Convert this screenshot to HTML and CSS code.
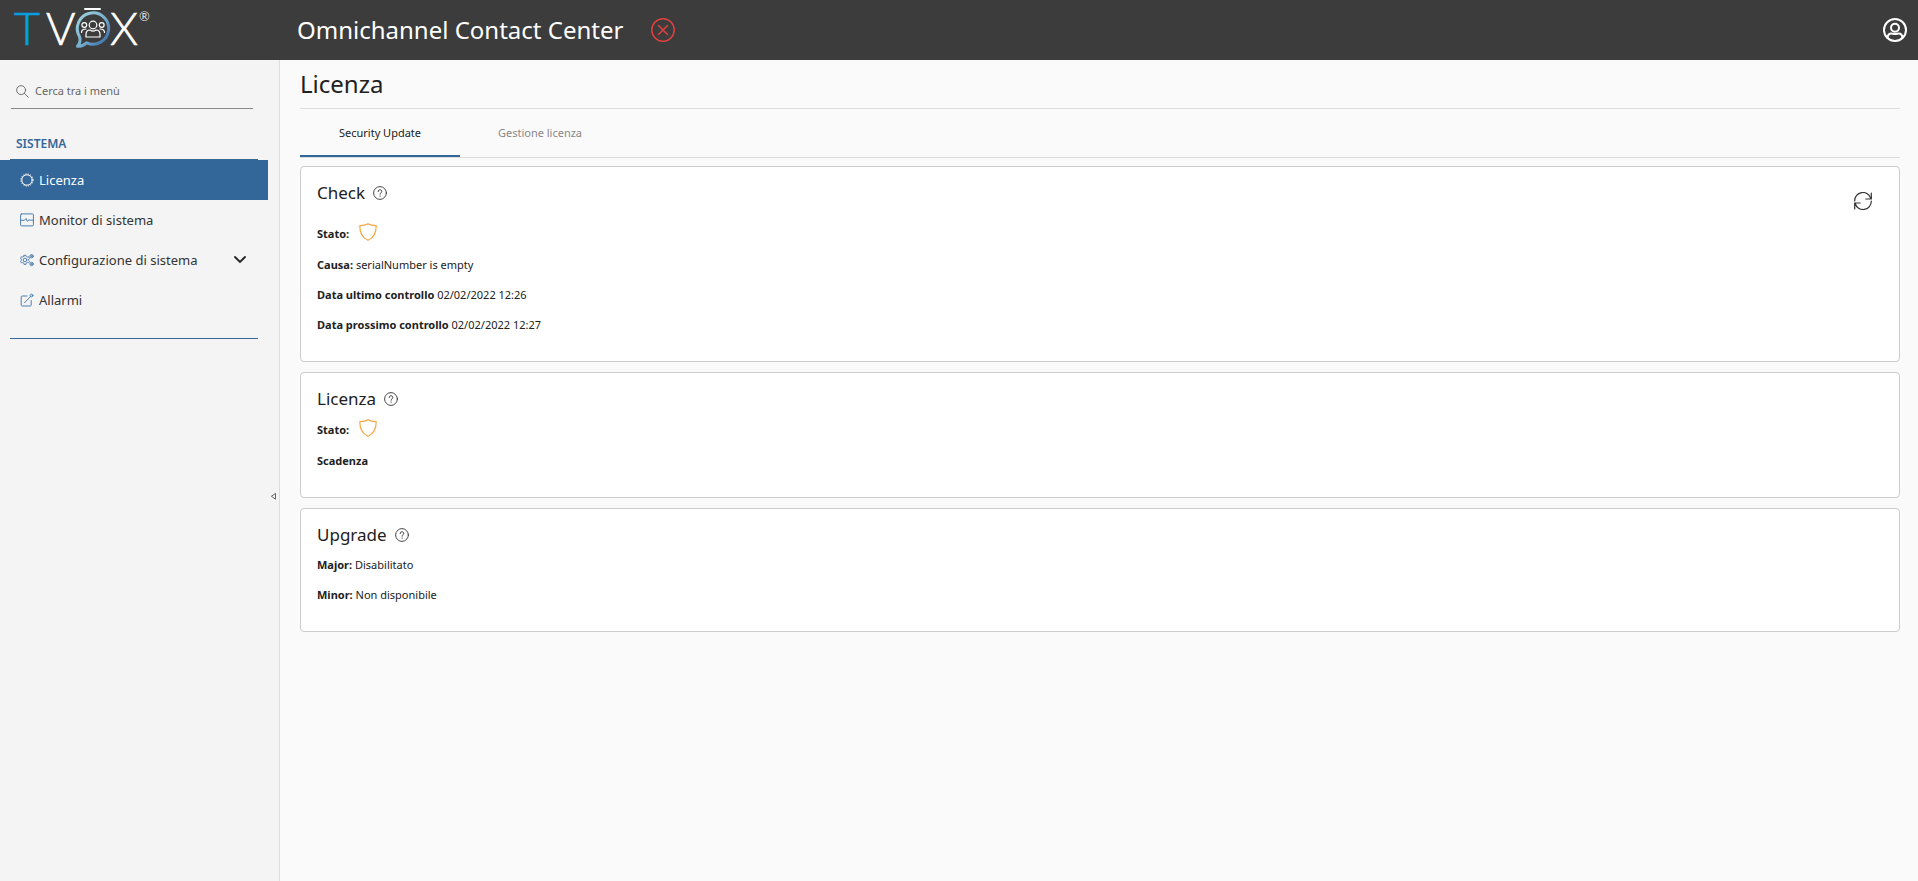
FILE: index.html
```html
<!DOCTYPE html>
<html lang="it">
<head>
<meta charset="utf-8">
<meta name="viewport" content="width=device-width, initial-scale=1">
<title>TVox - Licenza</title>
<link rel="stylesheet" href="styles.css">
</head>
<body>
<svg class="defs" width="0" height="0" aria-hidden="true">
  <symbol id="help" viewBox="0 0 14 14"><circle cx="7" cy="7" r="6.4" fill="none" stroke="currentColor" stroke-width=".9"/><path d="M5.200 5.500C5.200 4.300 6 3.800 7 3.800s1.800.6 1.800 1.600C8.800 6.700 7.100 6.800 7.100 8.200" fill="none" stroke="currentColor" stroke-width="1"/><circle cx="7.1" cy="10.1" r=".65" fill="currentColor"/></symbol>
  <symbol id="shield" viewBox="0 0 18 18"><path d="M9 .7C6.8 2 3.8 2.6.8 2.7.7 9.600 3 14.500 9 17.300 15 14.500 17.300 9.600 17.200 2.700 14.200 2.600 11.200 2 9 .7Z" fill="none" stroke="currentColor" stroke-width="1.2" stroke-linejoin="round"/></symbol>
</svg>
<header class="topbar">
  <a class="brand" href="#" aria-label="TVOX">
    <svg class="logo" viewBox="0 0 160 60" aria-hidden="true">
      <defs><linearGradient id="bubble" x1="0" y1="0" x2="1" y2="1"><stop offset="0" stop-color="#9fd3df"/><stop offset=".5" stop-color="#79b2cf"/><stop offset="1" stop-color="#2b62a8"/></linearGradient></defs>
      <text class="logo-letter logo-t" x="14" y="45">T</text>
      <text class="logo-letter" x="46" y="45">V</text>
      <text class="logo-letter" x="110" y="45">X</text>
      <text class="logo-mark" x="139" y="21">®</text>
      <path d="M85 9h15" stroke="#fff" stroke-width="2"/>
      <path d="M79.500 36.500A15.700 15.700 0 1 1 86.500 42.800C83.500 45.500 80.500 46.500 77.500 46.300 80 43.500 80.500 39.500 79.500 36.500Z" fill="none" stroke="url(#bubble)" stroke-width="3" stroke-linejoin="round"/>
      <g fill="none" stroke="#fff" stroke-width="1.200"><circle cx="93" cy="25" r="3.800"/><path d="M86 37v-2.500c0-3 2-4.500 4-4.500 2 1.500 4 1.500 6 0 2 0 4 1.500 4 4.500V37Z"/><circle cx="84.300" cy="25" r="2.400"/><circle cx="101.700" cy="25" r="2.400"/><path d="M81.500 32.500c0-2.500 1-3.500 4.500-3.500M104.500 32.500c0-2.500-1-3.500-4.500-3.500"/></g>
    </svg>
  </a>
  <div class="product">Omnichannel Contact Center</div>
  <svg class="status" viewBox="0 0 24 24" role="img" aria-label="Non connesso"><circle cx="12" cy="12" r="11.200"/><path d="m7.500 7.500 9 9m0-9-9 9"/></svg>
  <button class="account" type="button" aria-label="Profilo utente"><svg viewBox="0 0 24 24"><circle cx="12" cy="12" r="11"/><circle cx="12" cy="9.800" r="4"/><path d="M4.600 20c0-3 1.400-4.600 3.800-4.600 1.200 0 1.800.7 3.600.7s2.400-.7 3.600-.7c2.400 0 3.800 1.600 3.800 4.600"/></svg></button>
</header>
<div class="layout">
  <aside class="sidebar">
    <div class="menu">
      <label class="search"><svg viewBox="0 0 14 14" aria-hidden="true"><circle cx="5.500" cy="5.500" r="4.800"/><path d="m9 9 4.200 4.200"/></svg><input type="search" placeholder="Cerca tra i menù" aria-label="Cerca tra i menù"></label>
      <h2 class="section">SISTEMA</h2>
      <nav class="nav">
        <a class="item active" href="#" aria-current="page"><svg viewBox="0 0 14 14"><circle cx="7" cy="7" r="5.200"/><circle cx="7" cy="7" r="6.100" stroke-linecap="butt" stroke-dasharray="1.200 1.200"/></svg>Licenza</a>
        <a class="item" href="#"><svg viewBox="0 0 14 14"><rect x=".6" y=".9" width="12.800" height="12" rx="1"/><path d="M1 7.300h3.500L6 5.500l1.500 3L9 6.500l.6.700H13"/></svg>Monitor di sistema</a>
        <a class="item" href="#"><svg viewBox="0 0 14 14"><circle cx="5" cy="7" r="1.800"/><path d="m4.100 2.300 1.800 0 .3 1.200 1.200.6 1.200-.4.900 1.500-.8.900v1.400l.8.900-.9 1.500-1.200-.4-1.200.6-.3 1.300H4.100l-.3-1.300-1.200-.6-1.200.4-.9-1.500.8-.9V6.100l-.8-.9.900-1.500 1.200.4 1.200-.6Z"/><circle cx="11.600" cy="3.200" r="1.700"/><circle cx="11.600" cy="3.200" r=".5"/><circle cx="11.600" cy="11" r="1.700"/><circle cx="11.600" cy="11" r=".5"/></svg><span class="name">Configurazione di sistema</span><svg class="chevron" viewBox="0 0 12 8"><path d="m1 1 5 5 5-5"/></svg></a>
        <a class="item" href="#"><svg viewBox="0 0 14 14"><path d="M7 3H2.200C1.600 3 1.200 3.400 1.200 4v8c0 .6.400 1 1 1h8c.6 0 1-.4 1-1V7.500M4.500 9.800 11 3"/><circle cx="11.500" cy="2.500" r="1.400"/></svg>Allarmi</a>
      </nav>
    </div>
    <button class="collapse" type="button" aria-label="Riduci menù"><svg viewBox="0 0 5 7"><path d="M4.500.8v5.400L.7 3.500Z"/></svg></button>
  </aside>
  <main class="content">
    <h1 class="title">Licenza</h1>
    <div class="tabs" role="tablist">
      <button class="tab selected" type="button" role="tab" aria-selected="true">Security Update</button>
      <button class="tab" type="button" role="tab" aria-selected="false">Gestione licenza</button>
    </div>
    <section class="card">
      <div class="card-head">
        <h2>Check <svg class="help"><use href="#help"/></svg></h2>
        <button class="refresh" type="button" aria-label="Aggiorna"><svg viewBox="0 0 18 18"><path d="M.7 9A8.200 8.200 0 0 1 16.800 6.500M17.300 9A8.200 8.200 0 0 1 1.200 11.500M17.300 1v6h-5.500M.7 17v-6h5.500"/></svg></button>
      </div>
      <p class="state"><strong>Stato:</strong><svg class="shield"><use href="#shield"/></svg></p>
      <p><strong>Causa:</strong> serialNumber is empty</p>
      <p><strong>Data ultimo controllo</strong> 02/02/2022 12:26</p>
      <p><strong>Data prossimo controllo</strong> 02/02/2022 12:27</p>
    </section>
    <section class="card">
      <h2>Licenza <svg class="help"><use href="#help"/></svg></h2>
      <p class="state"><strong>Stato:</strong><svg class="shield"><use href="#shield"/></svg></p>
      <p><strong>Scadenza</strong></p>
    </section>
    <section class="card">
      <h2>Upgrade <svg class="help"><use href="#help"/></svg></h2>
      <p><strong>Major:</strong> Disabilitato</p>
      <p><strong>Minor:</strong> Non disponibile</p>
    </section>
  </main>
</div>
</body>
</html>
```
FILE: styles.css
```css
* { box-sizing: border-box; }
body {
  margin: 0;
  min-height: 100vh;
  display: flex;
  flex-direction: column;
  background: #fafafa;
  color: #212121;
  font: 11px/20px "Segoe UI", "Noto Sans", "Open Sans", sans-serif;
}
h1, h2, p { margin: 0; }
button { border: 0; padding: 0; background: none; color: inherit; font: inherit; cursor: pointer; }
a { color: inherit; text-decoration: none; }
svg { fill: none; stroke-linecap: round; flex: none; }
.defs { position: absolute; }

.topbar { height: 60px; display: flex; align-items: center; padding-right: 11px; background: #3c3c3c; color: #fff; }
.brand { width: 297px; height: 60px; }
.logo { display: block; width: 160px; height: 60px; }
.logo-letter { font: 300 45px Lato, sans-serif; fill: #fff; stroke: #fff; stroke-width: 0.6; }
.logo-t { fill: #069ee0; stroke: #069ee0; }
.logo-mark { font: 13px Lato, sans-serif; fill: #ddd; }
.product { font-size: 24px; line-height: 32px; }
.status { width: 24px; height: 24px; margin-left: 28px; stroke: #e0413f; stroke-width: 1.5; }
.account { margin-left: auto; width: 24px; height: 24px; }
.account svg { display: block; stroke: #fff; stroke-width: 2; }

.layout { flex: 1; display: flex; }
.sidebar { width: 280px; display: flex; background: #f4f4f4; border-right: 1px solid #ddd; }
.menu { width: 268px; padding-top: 14px; }
.search { display: flex; align-items: center; gap: 6px; height: 35px; margin: 0 15px 0 11px; padding: 0 5px; border-bottom: 1px solid #8a8a8a; }
.search svg { width: 13px; height: 13px; stroke: #666; }
.search input { flex: 1; min-width: 0; padding: 0; border: 0; outline: 0; background: none; font: inherit; color: #666; }
.search input::placeholder { color: #666; opacity: 1; }
.section { margin: 25px 10px 0; padding: 0 6px 5px; border-bottom: 1px solid #336699; color: #336699; font-size: 12px; line-height: 20px; font-weight: 600; }
.nav { padding-bottom: 18px; }
.nav::after { content: ""; display: block; margin: 18px 10px 0; border-bottom: 1px solid #336699; }
.item { height: 40px; display: flex; align-items: center; gap: 5px; padding: 0 22px 0 20px; font-size: 13px; color: #333; }
.item svg { width: 14px; height: 14px; stroke: #4d7fb0; stroke-width: 1; }
.item.active { background: #336699; color: #fff; }
.item.active svg { stroke: #fff; }
.item .name { flex: 1; white-space: nowrap; }
.item .chevron { width: 12px; height: 8px; stroke: #222; stroke-width: 1.8; }
.collapse { align-self: stretch; width: 11px; padding-top: 52px; display: grid; place-items: center; }
.collapse svg { width: 5px; height: 7px; stroke: #666; stroke-width: 1; }

.content { flex: 1; min-width: 0; padding: 0 18px 20px 20px; }
.title { padding: 8px 0; border-bottom: 1px solid #ddd; font-size: 24px; line-height: 32px; font-weight: 400; }
.tabs { display: flex; height: 49px; margin-bottom: 8px; border-bottom: 1px solid #ddd; }
.tab { width: 160px; padding-top: 2px; border-bottom: 2px solid transparent; color: #888; }
.tab.selected { color: #212121; border-color: #336699; }
.card { padding: 16px; margin-bottom: 10px; border: 1px solid #ccc; border-radius: 4px; background: #fff; }
.card h2 { display: flex; align-items: center; gap: 8px; margin-bottom: 10px; font-size: 17px; line-height: 20px; font-weight: 400; }
.card p { margin-bottom: 10px; }
.card strong { font-weight: 700; }
.card-head { display: flex; justify-content: space-between; height: 30px; margin-bottom: 10px; }
.help { width: 14px; height: 14px; color: #333; }
.state { display: flex; align-items: center; gap: 10px; height: 22px; }
.shield { width: 18px; height: 18px; margin-bottom: 4px; color: #f5a742; }
.refresh { width: 40px; height: 36px; display: grid; place-items: center; }
.refresh svg { width: 18px; height: 18px; stroke: #333; stroke-width: 1.2; }
```
